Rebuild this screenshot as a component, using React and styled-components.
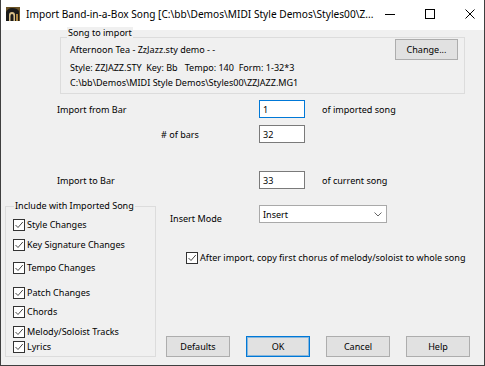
import React from 'react'
import styled, { createGlobalStyle } from 'styled-components'

const GlobalStyle = createGlobalStyle`
  html, body {
    margin: 0;
    padding: 0;
    background: #f0f0f0;
  }
  #root {
    width: 485px;
    height: 366px;
  }
`

const INCLUDE_ITEMS = [
  { label: 'Style Changes', top: 6 },
  { label: 'Key Signature Changes', top: 6 },
  { label: 'Tempo Changes', top: 9 },
  { label: 'Patch Changes', top: 11 },
  { label: 'Chords', top: 5 },
  { label: 'Melody/Soloist Tracks', top: 6 },
  { label: 'Lyrics', top: 1 }
]

const Window = styled.div`
  width: 485px;
  height: 366px;
  box-sizing: border-box;
  border: 1px solid #3f3f3f;
  border-top: none;
  background: #f0f0f0;
  font-family: 'Noto Sans', 'Segoe UI', sans-serif;
  font-size: 9.05px;
  color: #000;
  display: flex;
  flex-direction: column;
  overflow: hidden;
`

const TitleBar = styled.div`
  height: 30px;
  flex-shrink: 0;
  background: #fff;
  display: flex;
  align-items: center;
  padding: 0 9px 2px 5px;
  box-sizing: border-box;
`

const TitleText = styled.span`
  margin-left: 6px;
  font-size: 10.15px;
  white-space: nowrap;
`

const Controls = styled.div`
  margin-left: auto;
  flex-shrink: 0;
  display: flex;
  align-items: center;
  gap: 30px;
`

const Body = styled.div`
  flex: 1;
  display: flex;
  flex-direction: column;
`

const GroupBox = styled.div`
  border: 1px solid #dcdcdc;
  display: flex;
  flex-direction: column;
  box-sizing: border-box;
`

const SongGroup = styled(GroupBox)`
  margin: 7px 19px 0 59px;
`

const IncludeGroup = styled(GroupBox)`
  width: 151px;
  margin: 6px 0 0 4px;
`

const Caption = styled.span`
  align-self: flex-start;
  margin: ${({ $top }) => $top}px 0 0 ${({ $left }) => $left}px;
  padding: 0 1px;
  line-height: 12px;
  background: #f0f0f0;
`

const SongContent = styled.div`
  display: flex;
  justify-content: space-between;
  padding: 0 6px 4px 9px;
`

const SongLines = styled.div`
  display: flex;
  flex-direction: column;
  padding-top: 5px;
`

const SongLine = styled.div`
  line-height: 12px;
  margin-top: ${({ $top }) => $top || 0}px;
  white-space: pre;
`

const Button = styled.button`
  width: ${({ $width }) => $width || 64}px;
  height: 21px;
  padding: 0;
  background: #e1e1e1;
  border: 1px solid ${({ $default }) => ($default ? '#0078d7' : '#adadad')};
  box-shadow: ${({ $default }) => ($default ? 'inset 0 0 0 1px rgba(0,120,215,0.4)' : 'none')};
  font: inherit;
  color: #000;
`

const FormRow = styled.div`
  display: grid;
  grid-template-columns: 202px 46px auto;
  align-items: center;
  height: 18px;
  margin: ${({ $top }) => $top}px 0 0 56px;
`

const FieldLabel = styled.span`
  padding-left: ${({ $indent }) => $indent || 0}px;
  white-space: nowrap;
`

const Suffix = styled.span`
  padding-left: 17px;
  white-space: nowrap;
`

const TextBox = styled.input`
  width: 46px;
  height: 18px;
  box-sizing: border-box;
  margin: 0;
  padding: 0 3px;
  border: 1px solid ${({ $focused }) => ($focused ? '#0078d7' : '#7a7a7a')};
  background: #fff;
  font: inherit;
  color: #000;
  outline: none;
`

const BottomArea = styled.div`
  flex: 1;
  display: flex;
  margin-top: 11px;
  padding-bottom: 8px;
`

const CheckRow = styled.label`
  display: flex;
  align-items: center;
  gap: 2px;
  line-height: 14px;
  height: 14px;
  margin: ${({ $top }) => $top}px 0 0 ${({ $left }) => $left || 0}px;
  white-space: nowrap;
`

const CheckBox = styled.span`
  width: 12px;
  height: 12px;
  box-sizing: border-box;
  border: 1px solid #333;
  background: #fff;
  display: flex;
  align-items: center;
  justify-content: center;
  flex-shrink: 0;
`

const IncludeList = styled.div`
  display: flex;
  flex-direction: column;
  padding-left: 7px;
`

const RightColumn = styled.div`
  flex: 1;
  display: flex;
  flex-direction: column;
  margin-left: 10px;
  padding-right: 14px;
`

const ModeRow = styled.div`
  display: flex;
  align-items: flex-start;
  margin-top: 5px;
`

const ModeLabel = styled.span`
  width: 89px;
  padding-left: 4px;
  margin-top: 8px;
  line-height: 12px;
`

const Select = styled.div`
  width: 128px;
  height: 18px;
  box-sizing: border-box;
  border: 1px solid #a9a9a9;
  background: #fff;
  display: flex;
  align-items: center;
  justify-content: space-between;
  padding: 0 4px 0 3px;
`

const ButtonRow = styled.div`
  margin-top: auto;
  display: flex;
  justify-content: space-between;
`

const AppIcon = () => (
  <svg width="14" height="14" viewBox="0 0 14 14">
    <rect x="0" y="0" width="14" height="14" fill="#6b5326" />
    <path d="M0 14 V5 Q2 1 6 1 Q11 1 13 4 V14 Z" fill="#1a1a1a" />
    <path d="M3 14 V8 Q3 5 6 5 Q9 5 9 8 V14 Z" fill="#d9c08a" />
    <path d="M4.5 14 V9 Q4.5 7 6 7 Q7.5 7 7.5 9 V14 Z" fill="#1a1a1a" />
    <path d="M10 14 V7 H12 V14 Z" fill="#b08a45" />
  </svg>
)

const MinimizeIcon = () => (
  <svg width="10" height="10" viewBox="0 0 10 10">
    <path d="M0 5.5 H10" stroke="#000" strokeWidth="1" />
  </svg>
)

const MaximizeIcon = () => (
  <svg width="10" height="10" viewBox="0 0 10 10">
    <rect x="0.5" y="0.5" width="9" height="9" fill="none" stroke="#000" strokeWidth="1" />
  </svg>
)

const CloseIcon = () => (
  <svg width="10" height="10" viewBox="0 0 10 10">
    <path d="M0.5 0.5 L9.5 9.5 M9.5 0.5 L0.5 9.5" stroke="#000" strokeWidth="1" />
  </svg>
)

const CheckMark = () => (
  <svg width="10" height="10" viewBox="0 0 10 10">
    <path d="M1.5 5 L4 7.5 L8.8 2" fill="none" stroke="#333" strokeWidth="0.9" />
  </svg>
)

const Chevron = () => (
  <svg width="8" height="5" viewBox="0 0 8 5">
    <path d="M0.5 0.5 L4 4 L7.5 0.5" fill="none" stroke="#666" strokeWidth="1" />
  </svg>
)

const Check = ({ label, top, left }) => (
  <CheckRow $top={top} $left={left}>
    <CheckBox>
      <CheckMark />
    </CheckBox>
    {label}
  </CheckRow>
)

export default function App() {
  return (
    <>
      <GlobalStyle />
      <Window>
        <TitleBar>
          <AppIcon />
          <TitleText>
            Import Band-in-a-Box Song [C:\bb\Demos\MIDI Style Demos\Styles00\Z...
          </TitleText>
          <Controls>
            <MinimizeIcon />
            <MaximizeIcon />
            <CloseIcon />
          </Controls>
        </TitleBar>

        <Body>
          <SongGroup>
            <Caption $top={-11} $left={6}>Song to import</Caption>
            <SongContent>
              <SongLines>
                <SongLine>Afternoon Tea - ZzJazz.sty demo - -</SongLine>
                <SongLine $top={6}>
                  {'Style: ZZJAZZ.STY  Key: Bb   Tempo: 140  Form: 1-32*3'}
                </SongLine>
                <SongLine $top={3}>C:\bb\Demos\MIDI Style Demos\Styles00\ZZJAZZ.MG1</SongLine>
              </SongLines>
              <Button $width={63}>Change...</Button>
            </SongContent>
          </SongGroup>

          <FormRow $top={6}>
            <FieldLabel>Import from Bar</FieldLabel>
            <TextBox $focused readOnly value="1" />
            <Suffix>of imported song</Suffix>
          </FormRow>
          <FormRow $top={7}>
            <FieldLabel $indent={104}># of bars</FieldLabel>
            <TextBox readOnly value="32" />
          </FormRow>
          <FormRow $top={28}>
            <FieldLabel>Import to Bar</FieldLabel>
            <TextBox readOnly value="33" />
            <Suffix>of current song</Suffix>
          </FormRow>

          <BottomArea>
            <IncludeGroup>
              <Caption $top={-7} $left={8}>Include with Imported Song</Caption>
              <IncludeList>
                {INCLUDE_ITEMS.map((item) => (
                  <Check key={item.label} label={item.label} top={item.top} />
                ))}
              </IncludeList>
            </IncludeGroup>

            <RightColumn>
              <ModeRow>
                <ModeLabel>Insert Mode</ModeLabel>
                <Select>
                  <span>Insert</span>
                  <Chevron />
                </Select>
              </ModeRow>
              <Check
                label="After import, copy first chorus of melody/soloist to whole song"
                top={26}
                left={20}
              />
              <ButtonRow>
                <Button>Defaults</Button>
                <Button $default>OK</Button>
                <Button>Cancel</Button>
                <Button>Help</Button>
              </ButtonRow>
            </RightColumn>
          </BottomArea>
        </Body>
      </Window>
    </>
  )
}
